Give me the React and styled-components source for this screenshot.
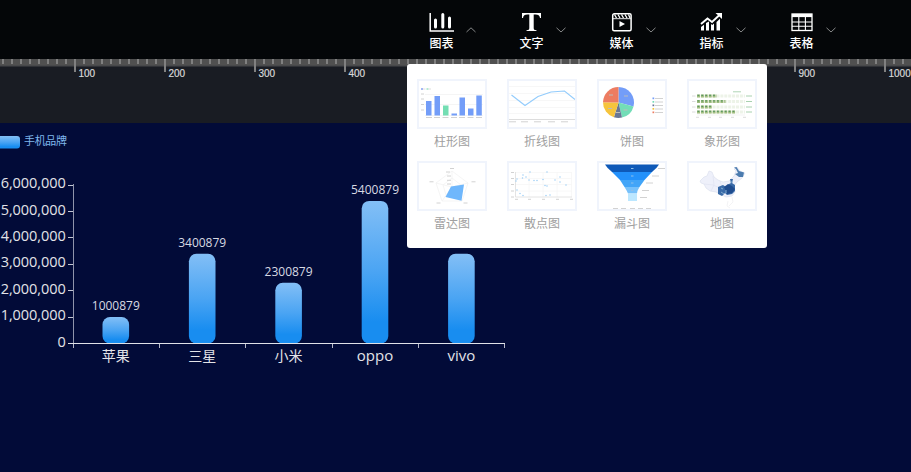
import React from "react";
import styled, { createGlobalStyle } from "styled-components";

const GlobalStyle = createGlobalStyle`
  * { box-sizing: border-box; }
  body {
    margin: 0;
    background: #020b38;
    font-family: "Liberation Sans", "Noto Sans CJK SC", sans-serif;
    overflow: hidden;
  }
`;

const Page = styled.div`
  position: relative;
  width: 911px;
  height: 472px;
  display: flex;
  flex-direction: column;
  overflow: hidden;
  background: #020b38;
`;

const Toolbar = styled.nav`
  flex: 0 0 59px;
  display: flex;
  padding-left: 407px;
  background: #040608;
`;

const ToolButton = styled.div`
  width: 90px;
  display: flex;
  align-items: flex-start;
  padding: 10px 0 0 20px;
  gap: 9px;
`;

const ToolFace = styled.div`
  width: 29px;
  display: flex;
  flex-direction: column;
  align-items: center;
`;

const ToolIcon = styled.svg`
  width: 28px;
  height: 24px;
  margin-right: 1px;
  display: block;
`;

const ToolLabel = styled.span`
  font-size: 12px;
  line-height: 20px;
  font-weight: 500;
  color: #fff;
  white-space: nowrap;
`;

const Chevron = styled.svg`
  width: 12px;
  height: 8px;
  margin-top: 16px;
  display: block;
`;

const Ruler = styled.div`
  flex: 0 0 64px;
  display: flex;
  background: linear-gradient(#505050 0 6px, #48494b 6px 7px, #303237 7px 8px, #191c23 8px);
  overflow: hidden;
`;

const RulerSegment = styled.div`
  flex: 0 0 90px;
  height: 13px;
  margin-left: ${(p) => (p.$first ? "-16px" : "0")};
  border-left: 2px solid #808080;
  padding: 8px 0 0 2.5px;
  background: repeating-linear-gradient(90deg, transparent 0 7px, #808080 7px 9px) 0 0 / 88px 5px no-repeat;
  color: #d8d8d8;
  font-size: 10px;
  line-height: 13px;
  -webkit-text-stroke: 0.2px #d8d8d8;
`;

const Canvas = styled.main`
  flex: 1;
  background: #020b38;
`;

const ChartSvg = styled.svg`
  width: 540px;
  height: 300px;
  display: block;
`;

const Menu = styled.div`
  position: absolute;
  left: 407px;
  top: 64px;
  width: 360px;
  height: 184px;
  display: grid;
  grid-template-columns: repeat(4, 90px);
  grid-auto-rows: 82px;
  padding-top: 15px;
  background: #fff;
  border-radius: 3px;
`;

const MenuItem = styled.div`
  display: flex;
  flex-direction: column;
  align-items: center;
`;

const Thumb = styled.svg`
  width: 70px;
  height: 50px;
  border: 2px solid #f0f4fc;
  display: block;
`;

const MenuLabel = styled.span`
  margin-top: 3px;
  font-family: "Noto Sans CJK SC", sans-serif;
  font-size: 12px;
  font-weight: 400;
  line-height: 18px;
  color: #a0a0a0;
`;

const icons = {
  chart: (
    <g fill="none" stroke="#fff">
      <path d="M3.2 3V21H27" strokeWidth="1.5" />
      <path d="M8.5 10V17M15.8 4.5V17M22.5 8V17" strokeWidth="3" strokeLinecap="round" />
    </g>
  ),
  text: (
    <path
      fill="#fff"
      d="M5 3H24V8H23C22.5 5.4 21.4 4.6 18.5 4.6H16.7V18C16.7 19.6 17.3 20.1 19.5 20.2V21H9.5V20.2C11.7 20.1 12.3 19.6 12.3 18V4.6H10.5C7.6 4.6 6.5 5.4 6 8H5Z"
    />
  ),
  media: (
    <g fill="none" stroke="#fff">
      <rect x="5.7" y="3.8" width="18.4" height="17" rx="1.5" strokeWidth="1.5" />
      <path d="M6 8.7H24" strokeWidth=".9" />
      <path d="M7.5 4.5L9.5 8M11 4.5L13 8M14.5 4.5L16.5 8M18 4.5L20 8M21.5 4.5L23 8" strokeWidth="1.3" />
      <path d="M12.5 11L18 14L12.5 17Z" fill="#fff" stroke="none" />
    </g>
  ),
  metric: (
    <g fill="none" stroke="#fff">
      <path d="M4 14L10.5 8.5L15 12L22.5 5" strokeWidth="1.9" />
      <path d="M18.5 3H25V9Z" fill="#fff" stroke="none" />
      <path fill="#fff" stroke="none" d="M4 17L7 14.7V20.5H4ZM9 13L12 11.5V20.5H9ZM14 14L15.3 15L17 13.5V20.5H14ZM19.5 12L23 8.7V20.5H19.5Z" />
    </g>
  ),
  table: (
    <g fill="none" stroke="#fff">
      <rect x="5" y="4" width="20" height="16.5" strokeWidth="1.3" />
      <path d="M5 5.5H25" strokeWidth="3.2" />
      <path d="M5 12H25M5 16.2H25M11.8 6V20.5M18.4 6V20.5" strokeWidth="1.1" />
    </g>
  ),
};

const tools = [
  { label: "图表", icon: "chart", open: true },
  { label: "文字", icon: "text" },
  { label: "媒体", icon: "media" },
  { label: "指标", icon: "metric" },
  { label: "表格", icon: "table" },
];

/* Faint strokes standing for captions too small to read. */
const Marks = ({ points, w = 5, color = "#d2d2d2" }) => (
  <path d={points.map(([x, y]) => `M${x} ${y}h${w}`).join("")} stroke={color} strokeWidth="1" fill="none" />
);

const BarThumb = () => (
  <>
    <path d="M6 13.5H64M6 23.5H64M6 34.5H64" stroke="#f5f5f5" />
    <path d="M2 8h2" stroke="#a5b8f5" strokeWidth="2" />
    <path d="M7.5 8h2" stroke="#b5ead2" strokeWidth="2" />
    <Marks points={[[4, 8], [9.5, 8]]} w={2.5} color="#dedede" />
    {[[7, 20], [15.5, 15], [24, 24.5], [32.5, 32.5], [40.5, 16.5], [49, 27.5], [57.3, 14.5]].map(([x, y], i) => (
      <rect key={x} x={x} y={y} width="5.5" height={34.5 - y} fill={i === 2 ? "#74deb3" : "#739df8"} />
    ))}
    <Marks points={[[2, 13], [2, 18], [2, 23.5], [2, 29]]} w={3} />
    <Marks points={[[7, 36.5], [15, 36.5], [23.5, 36.5], [32, 36.5], [40, 36.5], [48.5, 36.5], [57, 36.5]]} w={6} />
  </>
);

const LineThumb = () => (
  <>
    <path d="M0 5.5H66M0 12.5H66M0 19.5H66M0 26.5H66M0 32.5H66" stroke="#f7f7f7" />
    <path d="M0 38.5H66" stroke="#ddd" />
    <path d="M2.5 14L16 24.5L29 15.5L42 11L55.5 10L66 18.5" fill="none" stroke="#93ccfc" strokeWidth="1.1" />
    <Marks points={[[0, 40.8], [12, 40.8], [25, 40.8], [39, 40.8], [52, 40.8]]} w={7} />
  </>
);

const PieThumb = () => (
  <>
    <path d="M19.5 21.5V6A15.5 15.5 0 0 1 34.5 25.5Z" fill="#739df8" />
    <path d="M19.5 21.5L34.5 25.5A15.5 15.5 0 0 1 23 36.6Z" fill="#72ddb7" />
    <path d="M19.5 21.5L23 36.6A15.5 15.5 0 0 1 14.9 36.3Z" fill="#687695" />
    <path d="M19.5 21.5L14.9 36.3A15.5 15.5 0 0 1 4 21.2Z" fill="#f6c43d" />
    <path d="M19.5 21.5L4 21.2A15.5 15.5 0 0 1 19.5 6Z" fill="#ed7c61" />
    <Marks points={[[10, 14], [25, 15], [24.5, 29], [9, 27.5], [17, 31.5]]} w={4} color="#bcbcbc" />
    {["#739df8", "#72ddb7", "#687695", "#f6c43d", "#ed7c61"].map((c, i) => (
      <rect key={c} x="53.5" y={16.5 + i * 3.5} width="1.7" height="1.7" fill={c} />
    ))}
    <Marks points={[0, 1, 2, 3, 4].map((i) => [56, 17.5 + i * 3.5])} w={8} />
  </>
);

const PictoThumb = () => (
  <>
    {[[15, 20], [20.5, 28.5], [26, 15.5], [31, 39]].map(([y, w]) => (
      <g key={y}>
        <path d={`M8 ${y}h48`} stroke="#edf3e8" strokeWidth="3" strokeDasharray="3 .9" />
        <path d={`M8 ${y}h${w}`} stroke="#a0bc7e" strokeWidth="3" strokeDasharray="3 .9" />
        <path d={`M8.5 ${y - 0.7}h${w - 1}`} stroke="#5c9765" strokeWidth="1.2" strokeDasharray="1.7 2.2" />
        <Marks points={[[3, y]]} w={3.5} color="#dcdcdc" />
        <Marks points={[[57, y]]} w={6} color="#a8d1af" />
      </g>
    ))}
    <Marks points={[[44, 10.8]]} w={8} color="#b0d5b6" />
    <path d="M8 34H56" stroke="#eee" strokeWidth=".7" />
    <Marks points={[[7, 36.3], [19, 36.3], [30, 36.3], [42, 36.3], [54, 36.3]]} w={3} color="#dcdcdc" />
  </>
);

const RadarThumb = () => (
  <>
    <path d="M33 8L49 20L43 38H23L17 20ZM33 15L42 22L39 32H27L24 22ZM33 24V8M33 24L49 20M33 24L17 20M33 24L23 38M33 24L43 38" fill="none" stroke="#f1f1f1" strokeWidth=".7" />
    <path d="M32 23.5L45 21.5L42.5 37.8L26.5 34Z" fill="#6fb7fc" />
    <Marks points={[[31, 5.5], [10.5, 18.8], [52.5, 18.8], [17.5, 40], [44.5, 40], [27, 9], [28, 13], [28, 17.3], [28, 21]]} w={4} />
  </>
);

const scatter = [[21, 9], [14, 12], [13.5, 15], [17, 14], [8, 16], [7, 18], [20, 17], [25, 17.5], [28, 17.5], [34, 16.5], [38, 9], [51, 14], [46, 17], [51, 19], [57, 22], [36, 22.5], [38, 23], [8, 27], [11, 30.5], [14, 32.5], [37, 32.5], [41, 32]];
const ScatterThumb = () => (
  <>
    <path d="M6 9.5H63M6 15.5H63M6 21.5H63M6 28H63M20 9V34M34 9V34M48 9V34M62.5 9V34" stroke="#f6f6f6" strokeWidth=".8" />
    <path d="M6.5 9V34H63" fill="none" stroke="#ddd" strokeWidth=".8" />
    {scatter.map(([x, y]) => <circle key={`${x}-${y}`} cx={x} cy={y} r=".75" fill="#9ccdf6" />)}
    <Marks points={[[2, 9.5], [2, 15.5], [2, 21.5], [2, 28], [2, 34], [6, 36.3], [19, 36.3], [33, 36.3], [47, 36.3], [61, 36.3]]} w={3} />
  </>
);

const FunnelThumb = () => (
  <>
    <path d="M6 1.5H60Q58 5 53 9H13Q8 5 6 1.5Z" fill="#0e59b8" />
    <path d="M13 9H53L45.5 17H21Z" fill="#2391fb" />
    <path d="M21 17H45.5L40.5 24H25.5Z" fill="#42a5f8" />
    <path d="M25.5 24H40.5Q38 28 38 30.5H29Q28 28 25.5 24Z" fill="#77c1fb" />
    <path d="M29 30.5H38V38H29Z" fill="#bce7ff" />
    <Marks points={[[32, 5.5], [32, 13], [32, 20], [32, 27.5]]} w={2.5} color="#8fbfe9" />
    <Marks points={[[59, 5.5], [53, 13], [47, 20], [43, 27.5], [41, 34.5]]} w={7} />
    <Marks points={[[14, 45.5], [22, 45.5], [31, 45.5], [39, 45.5], [47, 45.5]]} w={5} />
  </>
);

const MapThumb = () => (
  <>
    <path d="M11 18L15 14L18 13L20 8L23 9L25 14L29 17L34 19L40 18L45 13L47 8L45 6L48 4L51 8L56 10L53 15L48 19L45 23L46 29L43 33L37 34L31 31L27 29L21 28L17 25L15 21L12 20Z" fill="#eef0fa" stroke="#d9ddec" strokeWidth=".6" />
    <path d="M15 21L24 22L31 25L37 25M24 13L25 22L22 28M31 18L33 25" fill="none" stroke="#dde1f0" strokeWidth=".6" />
    <path d="M45 4.5L47.5 4L50 8L55 9.5L54 14L50 14L46 11L49 10L47 6Z" fill="#4c7caf" />
    <path d="M41 16L44 16L43 20L46 22L46 28L43 31L38 32L36 30L33 33L29 31L29 24L34 22L37 24L40 21L42 20Z" fill="#3a6ba8" />
    <path d="M35 24L39 21L43 23L46 26L43 30L38 31Z" fill="#1f4c8e" />
    <path d="M32 25L34 26M32 29L35 31M41 19L44 19M37 27V30" stroke="#85acd0" strokeWidth="1" />
    <path d="M43 34L44 39L40 43M39 38L38 43L41 45" fill="none" stroke="#f0f0f3" strokeWidth=".8" />
  </>
);

const chartTypes = [
  ["柱形图", BarThumb],
  ["折线图", LineThumb],
  ["饼图", PieThumb],
  ["象形图", PictoThumb],
  ["雷达图", RadarThumb],
  ["散点图", ScatterThumb],
  ["漏斗图", FunnelThumb],
  ["地图", MapThumb],
];

const AxisText = styled.text`
  font-family: "Open Sans", "Noto Sans CJK SC", sans-serif;
  font-size: ${(p) => p.$size || 14}px;
  fill: #e2e3e8;
`;

const ValueText = styled(AxisText)`
  font-size: 12px;
  fill: #d8dae3;
`;

const LegendText = styled(AxisText)`
  font-size: 11px;
  fill: #7fb8ed;
`;

const sales = [
  ["苹果", 1000879],
  ["三星", 3400879],
  ["小米", 2300879],
  ["oppo", 5400879],
  ["vivo", 3400879],
];

const BASE = 220.5;
const LEFT = 72.6;
const STEP = 86.4;
const UNIT = 26.4;

function PhoneChart() {
  return (
    <ChartSvg viewBox="0 0 540 300">
      <defs>
        <linearGradient id="bar" x1="0" y1="0" x2="0" y2="1">
          <stop offset="0" stopColor="#83bff6" />
          <stop offset=".5" stopColor="#4aa4f3" />
          <stop offset=".85" stopColor="#188df0" />
          <stop offset="1" stopColor="#188df0" />
        </linearGradient>
      </defs>
      <rect x="-5" y="13" width="25" height="12.5" rx="3" fill="url(#bar)" />
      <LegendText x="24" y="22" textLength="43">手机品牌</LegendText>
      {[0, 1, 2, 3, 4, 5, 6].map((n) => (
        <g key={n}>
          <path d={`M68 ${Math.round(BASE - n * UNIT + 0.4) - 0.5}h5`} stroke="#c2c5d2" />
          <AxisText $size={14.5} x="65.7" y={223.6 - n * UNIT} textAnchor="end" textLength={n ? 65 : 8.5}>
            {(n * 1000000).toLocaleString("en-US")}
          </AxisText>
        </g>
      ))}
      {sales.map(([name, value], i) => {
        const center = LEFT + STEP * (i + 0.5);
        const h = (value / 1000000) * UNIT;
        return (
          <g key={name}>
            <rect x={center - 13.3} y={BASE - h} width="26.6" height={h} rx="7.5" fill="url(#bar)" />
            <ValueText x={center} y={BASE - h - 7} textAnchor="middle" textLength="48">{value}</ValueText>
            <AxisText $size={/[a-z]/.test(name) ? 15 : 14} x={center} y="238" textAnchor="middle">{name}</AxisText>
          </g>
        );
      })}
      <path d="M73.5 61V221" stroke="#8f94ab" />
      <path d="M68 220.5H505" stroke="#e0e2e8" />
      {[0, 1, 2, 3, 4, 5].map((i) => (
        <path key={i} d={`M${Math.floor(73 + i * STEP) - (i === 5 ? 0.5 : -0.5)} 221v4`} stroke="#b6b9c8" />
      ))}
    </ChartSvg>
  );
}

export default function App() {
  return (
    <Page>
      <GlobalStyle />
      <Toolbar>
        {tools.map(({ label, icon, open }) => (
          <ToolButton key={label}>
            <ToolFace>
              <ToolIcon viewBox="0 0 28 24">{icons[icon]}</ToolIcon>
              <ToolLabel>{label}</ToolLabel>
            </ToolFace>
            <Chevron viewBox="0 0 12 8">
              <path d={open ? "M1.5 6L6 1.8L10.5 6" : "M1.5 1.8L6 6L10.5 1.8"} fill="none" stroke="#858687" />
            </Chevron>
          </ToolButton>
        ))}
      </Toolbar>
      <Ruler>
        {[0, 100, 200, 300, 400, 500, 600, 700, 800, 900, 1000].map((n) => (
          <RulerSegment key={n} $first={n === 0}>{n || ""}</RulerSegment>
        ))}
      </Ruler>
      <Canvas>
        <PhoneChart />
      </Canvas>
      <Menu>
        {chartTypes.map(([label, Drawing]) => (
          <MenuItem key={label}>
            <Thumb viewBox="0 0 66 46"><Drawing /></Thumb>
            <MenuLabel>{label}</MenuLabel>
          </MenuItem>
        ))}
      </Menu>
    </Page>
  );
}
